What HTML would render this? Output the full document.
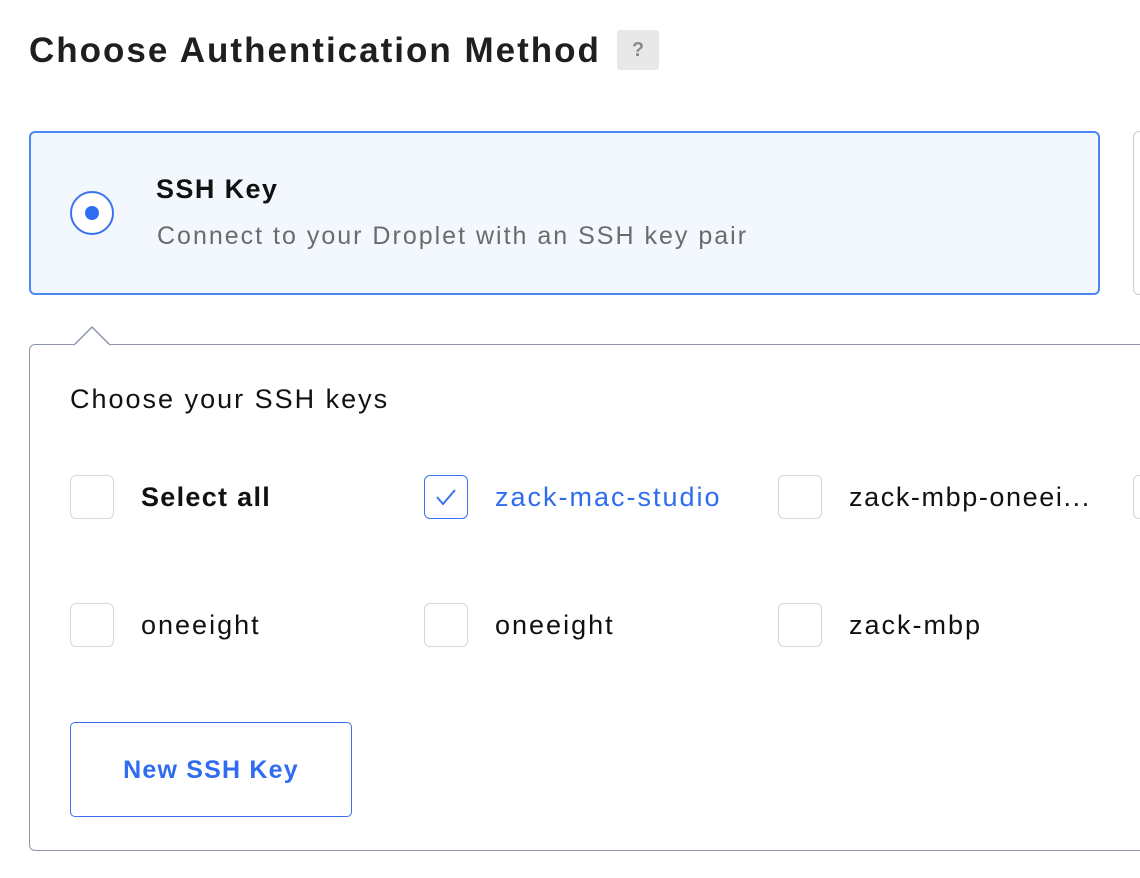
<!DOCTYPE html>
<html><head><style>
*{box-sizing:border-box;margin:0;padding:0}
body{width:1140px;height:878px;overflow:hidden;background:#fff;font-family:"Liberation Sans",sans-serif;position:relative;color:#000}
.abs{position:absolute}
h1{position:absolute;left:29px;top:31px;font-size:35px;font-weight:600;color:#1f1f1f;letter-spacing:2px}
.q{position:absolute;left:617px;top:30px;width:42px;height:40px;background:#e8e8e8;border-radius:3px;color:#8a8a8a;font-size:20px;font-weight:bold;text-align:center;line-height:40px}
.card{position:absolute;left:29px;top:131px;width:1071px;height:164px;border:2px solid #4a88f2;background:#f3f7fe;border-radius:6px}
.card2{position:absolute;left:1133px;top:131px;width:40px;height:164px;border:1.5px solid #ccc;border-radius:6px}
.radio{position:absolute;left:70px;top:191px;width:44px;height:44px;border:2px solid #3a72ef;border-radius:50%;background:#fff}
.radio:after{content:"";position:absolute;left:13px;top:13px;width:14px;height:14px;border-radius:50%;background:#2f6cf0}
.panel{position:absolute;left:29px;top:344px;width:1140px;height:507px;border:1.5px solid #8c95ab;border-radius:6px}
.cb{position:absolute;width:44px;height:44px;border:1.5px solid #d6d6d6;border-radius:6px;background:#fff}
.lbl{position:absolute;font-size:27px;color:#111;line-height:30px;letter-spacing:2px;white-space:nowrap}
.btn{position:absolute;left:70px;top:722px;width:282px;height:95px;border:1.5px solid #3a6ef0;border-radius:5px;color:#2f6cf0;font-size:25px;font-weight:600;text-align:center;line-height:95px;letter-spacing:1.2px}
</style></head><body>
<h1>Choose Authentication Method</h1>
<div class="q">?</div>
<div class="card"></div>
<div class="card2"></div>
<div class="radio"></div>
<div class="abs" style="left:156px;top:174px;font-size:27px;font-weight:600;color:#111;letter-spacing:1.4px">SSH Key</div>
<div class="abs" style="left:157px;top:222px;font-size:25px;color:#6b6b6b;letter-spacing:2px;white-space:nowrap">Connect to your Droplet with an SSH key pair</div>
<div class="panel"></div>
<svg class="abs" style="left:74px;top:324px" width="38" height="22"><path d="M0 21 L18 3 L36 21" fill="#fff" stroke="#8c95ab" stroke-width="1.5"/><rect x="1" y="20.5" width="34" height="4" fill="#fff"/></svg>
<div class="abs" style="left:70px;top:384px;font-size:27px;color:#111;letter-spacing:2px">Choose your SSH keys</div>
<div class="cb" style="left:70px;top:475px"></div>
<div class="lbl" style="left:141px;top:482px;font-weight:bold;letter-spacing:1.3px">Select all</div>
<div class="cb" style="left:424px;top:475px;border-color:#3a72ef">
<svg width="41" height="41" style="position:absolute;left:0;top:0"><path d="M12 21 L18 28 L30 14" fill="none" stroke="#3a72ef" stroke-width="2"/></svg></div>
<div class="lbl" style="left:495px;top:482px;color:#2f6cf0">zack-mac-studio</div>
<div class="cb" style="left:778px;top:475px"></div>
<div class="lbl" style="left:849px;top:482px;letter-spacing:1.6px">zack-mbp-oneei...</div>
<div class="cb" style="left:1133px;top:475px"></div>
<div class="cb" style="left:70px;top:603px"></div>
<div class="lbl" style="left:141px;top:610px">oneeight</div>
<div class="cb" style="left:424px;top:603px"></div>
<div class="lbl" style="left:495px;top:610px">oneeight</div>
<div class="cb" style="left:778px;top:603px"></div>
<div class="lbl" style="left:849px;top:610px">zack-mbp</div>
<div class="btn">New SSH Key</div>
</body></html>
